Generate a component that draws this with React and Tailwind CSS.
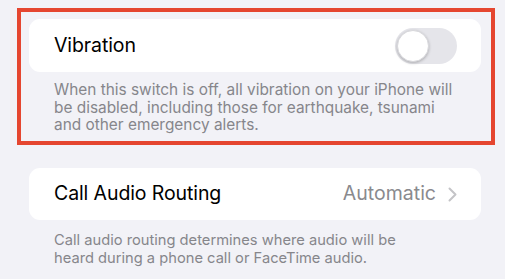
import React from "react";

function Toggle() {
  return (
    <div className="w-[62px] h-[36px] rounded-full bg-[#e5e5ea] p-[2px] flex items-center">
      <div className="w-[32px] h-[32px] rounded-full bg-white shadow-[0_1px_3px_rgba(0,0,0,0.25)] border border-[#d8d8dc]" />
    </div>
  );
}

export default function App() {
  return (
    <div
      className="w-[505px] h-[279px] bg-[#f2f2f7] overflow-hidden pt-[8px]"
      style={{ fontFamily: "Inter, 'Noto Sans', sans-serif" }}
    >
      {/* Highlighted group */}
      <div className="ml-[17px] w-[478px] h-[137px] border-[4px] border-[#e54630] pl-[8px] pr-[10px] pt-[7px]">
        <div className="h-[53px] bg-white rounded-[11px] flex items-center justify-between pl-[25px] pr-[24px]">
          <span className="text-[19.5px] text-black tracking-[-0.1px]">Vibration</span>
          <Toggle />
        </div>
        <p className="mt-[9px] ml-[25px] w-[408px] text-[15.4px] leading-[17.5px] text-[#86868b]">
          When this switch is off, all vibration on your iPhone will be disabled, including those for earthquake, tsunami and other emergency alerts.
        </p>
      </div>

      {/* Call Audio Routing */}
      <div className="ml-[29px] w-[452px] mt-[23px]">
        <div className="h-[52px] bg-white rounded-[11px] flex items-center justify-between pl-[25px] pr-[24px]">
          <span className="text-[19.5px] text-black tracking-[-0.1px]">Call Audio Routing</span>
          <div className="flex items-center gap-[12px]">
            <span className="text-[19.5px] text-[#8a8a8e]">Automatic</span>
            <svg width="9" height="15" viewBox="0 0 9 15" fill="none">
              <path d="M1.5 1.5 L7.5 7.5 L1.5 13.5" stroke="#c4c4c7" strokeWidth="2" strokeLinecap="round" strokeLinejoin="round" />
            </svg>
          </div>
        </div>
        <p className="mt-[11px] ml-[25px] w-[375px] text-[14.7px] leading-[18px] text-[#86868b]">
          Call audio routing determines where audio will be heard during a phone call or FaceTime audio.
        </p>
      </div>
    </div>
  );
}
